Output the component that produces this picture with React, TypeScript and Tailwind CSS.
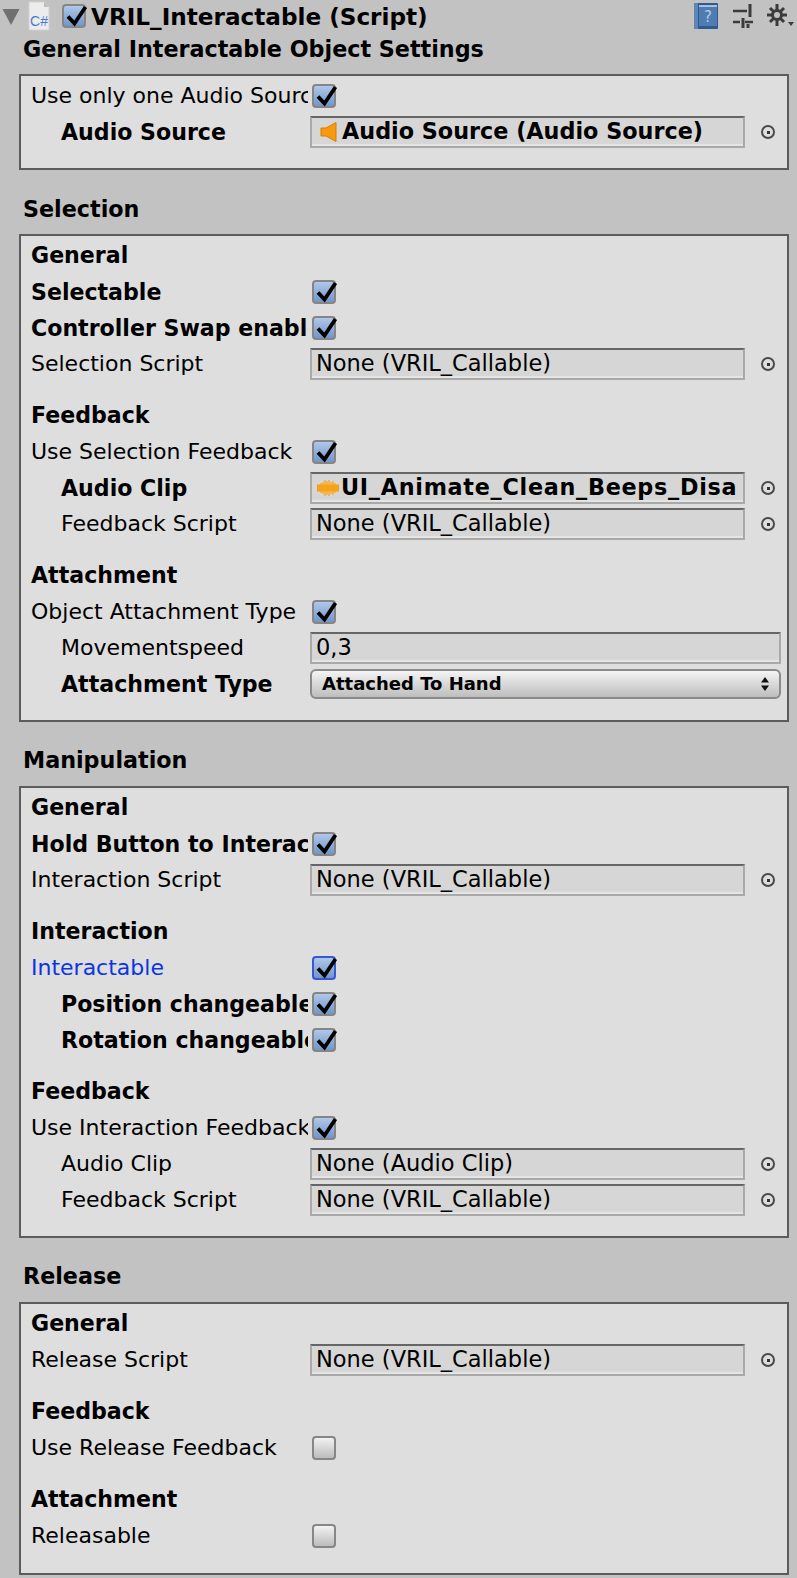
import React from "react";

const FONT = "font-['DejaVu_Sans',sans-serif]";

function Check() {
  return (
    <svg className="absolute left-[-2px] top-[-2px]" width="28" height="24" viewBox="0 0 28 24">
      <path d="M6 12.5 L12.5 19.5 L23.5 3" fill="none" stroke="#000" strokeWidth="3.8" />
    </svg>
  );
}

function Toggle({ on = true, focus = false }: { on?: boolean; focus?: boolean }) {
  const look = focus
    ? "border-[#3558d8] bg-gradient-to-b from-[#b0c8e8] to-[#7296c8]"
    : on
      ? "border-[#868686] bg-gradient-to-b from-[#b0c8e8] to-[#7296c8]"
      : "border-[#868686] bg-gradient-to-b from-[#f2f2f2] to-[#bcbcbc]";
  return (
    <div className={`relative box-border h-[24px] w-[24px] shrink-0 rounded-[4px] border-2 ${look}`}>
      {on && <Check />}
    </div>
  );
}

function Speaker() {
  return (
    <svg className="ml-[4px] mr-[5px] shrink-0" width="17" height="20" viewBox="0 0 17 20">
      <path d="M1 6 H6 L16 0.5 V19.5 L6 14 H1 Z" fill="#f89a10" stroke="#d87c08" strokeWidth="1" />
    </svg>
  );
}

function Wave() {
  return (
    <svg className="ml-[1px] mr-[2px] shrink-0" width="22" height="20" viewBox="0 0 22 20">
      <path d="M0 10 H22" stroke="#f59a12" strokeWidth="7" />
      <path
        d="M2 7 V13 M4 5 V15 M6 4 V16 M8 2 V18 M10 3 V17 M12 2 V18 M14 4 V16 M16 3 V17 M18 5 V15 M20 7 V13"
        stroke="#f8a81c"
        strokeWidth="1.3"
      />
    </svg>
  );
}

function Picker() {
  return (
    <div className="ml-[16px] flex h-[14px] w-[14px] shrink-0 items-center justify-center rounded-full border-2 border-[#4a4a4a]">
      <div className="h-[3px] w-[3px] bg-[#333]" />
    </div>
  );
}

function Field({ children, bold, wide }: { children: React.ReactNode; bold?: boolean; wide?: boolean }) {
  return (
    <div
      className={`box-border flex h-[32px] items-center overflow-hidden whitespace-nowrap border-2 border-[#a9a9a9] border-t-[#666] bg-[#d6d6d6] pl-[4px] shadow-[inset_0_-2px_0_#e4e4e4] ${
        wide ? "w-[471px]" : "w-[435px]"
      } ${bold ? "text-[22.3px] font-bold" : "text-[22.5px]"}`}
    >
      {children}
    </div>
  );
}

function Row({
  label,
  bold,
  indent,
  blue,
  children,
}: {
  label: string;
  bold?: boolean;
  indent?: boolean;
  blue?: boolean;
  children?: React.ReactNode;
}) {
  return (
    <div className="flex h-[36px] items-center">
      <div
        className={`mr-[2px] w-[287px] shrink-0 overflow-hidden whitespace-nowrap leading-[36px] ${
          indent ? "pl-[40px]" : "pl-[10px]"
        } ${bold ? "text-[22.1px] font-bold" : "text-[22px]"} ${blue ? "text-[#0a35e0]" : "text-black"}`}
      >
        {label}
      </div>
      {children}
    </div>
  );
}

function ToggleRow(props: { label: string; bold?: boolean; indent?: boolean; blue?: boolean; on?: boolean; focus?: boolean }) {
  return (
    <Row label={props.label} bold={props.bold} indent={props.indent} blue={props.blue}>
      <div className="w-[2px]" />
      <Toggle on={props.on ?? true} focus={props.focus} />
    </Row>
  );
}

function ObjectRow({
  label,
  value,
  bold,
  indent,
  icon,
  wideText,
}: {
  label: string;
  value: string;
  bold?: boolean;
  indent?: boolean;
  icon?: React.ReactNode;
  wideText?: boolean;
}) {
  return (
    <Row label={label} bold={bold} indent={indent}>
      <Field bold={bold}>
        {icon}
        <span className={wideText ? "tracking-[0.72px]" : ""}>{value}</span>
      </Field>
      <Picker />
    </Row>
  );
}

function Sub({ children, first }: { children: string; first?: boolean }) {
  return (
    <div className={`h-[36px] pl-[10px] text-[22.1px] font-bold leading-[34px] ${first ? "" : "mt-[16px]"}`}>
      {children}
    </div>
  );
}

function Panel({ children, className }: { children: React.ReactNode; className?: string }) {
  return (
    <div className={`ml-[19px] box-border w-[770px] border-2 border-[#5c5c5c] bg-[#dedede] pt-[2px] ${className ?? "pb-[18px]"}`}>
      {children}
    </div>
  );
}

function Section({ children, className }: { children: string; className: string }) {
  return <div className={`h-[36px] pl-[23px] text-[22.25px] font-bold leading-[35px] ${className}`}>{children}</div>;
}

export default function App() {
  return (
    <div className={`${FONT} h-[1578px] w-[797px] overflow-hidden bg-[#c2c2c2] text-black`}>
      {/* component header */}
      <div className="relative flex h-[32px] items-center">
        <svg className="ml-[2px] mt-[2px] shrink-0" width="18" height="18" viewBox="0 0 18 18">
          <path d="M0.5 1 H17.5 L9 17 Z" fill="#707070" />
        </svg>
        <svg className="ml-[8px] shrink-0" width="22" height="30" viewBox="0 0 22 30">
          <path d="M1 1 H16 L21 6 V29 H1 Z" fill="#ececec" stroke="#d2d2d2" strokeWidth="1" />
          <path d="M16 1 V6 H21 Z" fill="#bdbdbd" />
          <text x="11" y="25" fontSize="14" textAnchor="middle" fill="#4a78d0" fontFamily="'Liberation Sans',sans-serif">
            C#
          </text>
        </svg>
        <div className="ml-[12px]">
          <Toggle />
        </div>
        <div className="ml-[5px] mt-[2px] text-[23.15px] font-bold">VRIL_Interactable (Script)</div>
        <svg className="absolute left-[693px] top-[2px]" width="26" height="28" viewBox="0 0 26 28">
          <rect x="1" y="1" width="24" height="26" rx="1" fill="#2f5a90" />
          <rect x="1" y="1" width="4" height="26" fill="#5e86b4" />
          <rect x="6" y="3" width="18" height="21" fill="#4f7cb2" />
          <rect x="6" y="3" width="18" height="2" fill="#a8c0dc" />
          <text x="15" y="20" fontSize="15" textAnchor="middle" fill="#b8cce4">
            ?
          </text>
        </svg>
        <svg className="absolute left-[733px] top-[4px]" width="21" height="24" viewBox="0 0 21 24">
          <path d="M0 7 H14 M0 18 H7 M12 18 H20" stroke="#3c3c3c" strokeWidth="2.5" />
          <path d="M17 0 V13 M10 14 V24 M15 20 V24" stroke="#3c3c3c" strokeWidth="3" />
        </svg>
        <svg className="absolute left-[767px] top-[4px]" width="28" height="24" viewBox="0 0 28 24">
          <path d="M10 0 V22 M0 11 H20 M3 4 L17 18 M17 4 L3 18" stroke="#3c3c3c" strokeWidth="3" />
          <circle cx="10" cy="11" r="6" fill="#3c3c3c" />
          <circle cx="10" cy="11" r="3" fill="#c2c2c2" />
          <path d="M21 18 H27 L24 22 Z" fill="#3c3c3c" />
        </svg>
      </div>

      <Section className="mb-[6px]">General Interactable Object Settings</Section>
      <Panel>
        <ToggleRow label="Use only one Audio Source" />
        <ObjectRow label="Audio Source" bold indent value="Audio Source (Audio Source)" icon={<Speaker />} />
      </Panel>

      <Section className="mb-[6px] mt-[22px]">Selection</Section>
      <Panel>
        <Sub first>General</Sub>
        <ToggleRow label="Selectable" bold />
        <ToggleRow label="Controller Swap enabled" bold />
        <ObjectRow label="Selection Script" value="None (VRIL_Callable)" />
        <Sub>Feedback</Sub>
        <ToggleRow label="Use Selection Feedback" />
        <ObjectRow label="Audio Clip" bold indent value="UI_Animate_Clean_Beeps_Disa" icon={<Wave />} wideText />
        <ObjectRow label="Feedback Script" indent value="None (VRIL_Callable)" />
        <Sub>Attachment</Sub>
        <ToggleRow label="Object Attachment Type" />
        <Row label="Movementspeed" indent>
          <Field wide>0,3</Field>
        </Row>
        <Row label="Attachment Type" bold indent>
          <div className="box-border flex h-[30px] w-[471px] items-center justify-between rounded-[6px] border-2 border-[#8a8a8a] bg-gradient-to-b from-[#f4f4f4] to-[#bebebe] pl-[10px] pr-[10px] text-[18px] font-bold">
            <span className="mb-[2px]">Attached To Hand</span>
            <svg width="8" height="14" viewBox="0 0 8 14">
              <path d="M4 0 L8 5.5 H0 Z M4 14 L0 8.5 H8 Z" fill="#111" />
            </svg>
          </div>
        </Row>
      </Panel>

      <Section className="mb-[7px] mt-[21px]">Manipulation</Section>
      <Panel>
        <Sub first>General</Sub>
        <ToggleRow label="Hold Button to Interact" bold />
        <ObjectRow label="Interaction Script" value="None (VRIL_Callable)" />
        <Sub>Interaction</Sub>
        <ToggleRow label="Interactable" blue focus />
        <ToggleRow label="Position changeable" bold indent />
        <ToggleRow label="Rotation changeable" bold indent />
        <Sub>Feedback</Sub>
        <ToggleRow label="Use Interaction Feedback" />
        <ObjectRow label="Audio Clip" indent value="None (Audio Clip)" />
        <ObjectRow label="Feedback Script" indent value="None (VRIL_Callable)" />
      </Panel>

      <Section className="mb-[7px] mt-[21px]">Release</Section>
      <Panel className="pb-[19px]">
        <Sub first>General</Sub>
        <ObjectRow label="Release Script" value="None (VRIL_Callable)" />
        <Sub>Feedback</Sub>
        <ToggleRow label="Use Release Feedback" on={false} />
        <Sub>Attachment</Sub>
        <ToggleRow label="Releasable" on={false} />
      </Panel>
    </div>
  );
}
